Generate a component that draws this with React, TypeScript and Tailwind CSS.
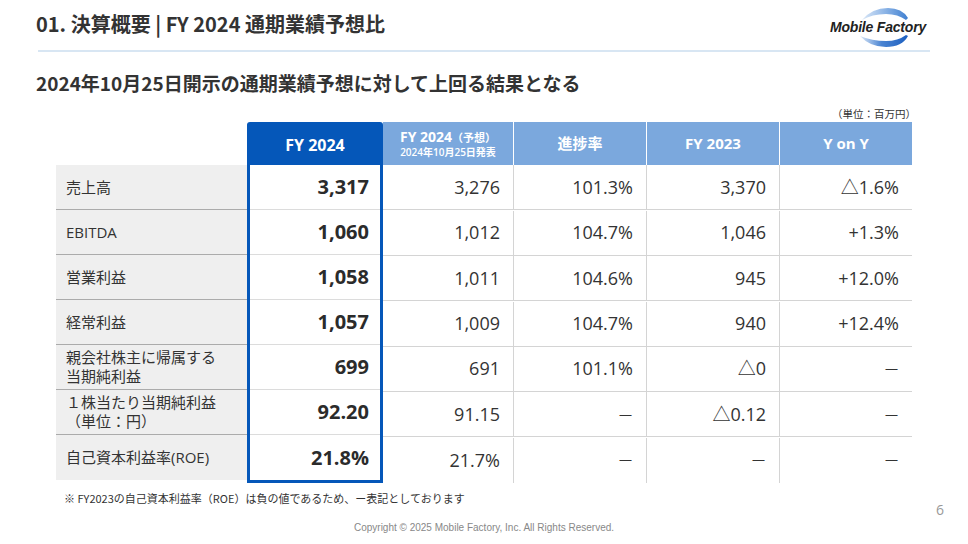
import React from "react";

type Row = {
  label: string[];
  fy: string;
  fc: string;
  prog: string;
  prev: string;
  yoy: string;
};

const DASH = "—";

const rows: Row[] = [
  { label: ["売上高"], fy: "3,317", fc: "3,276", prog: "101.3%", prev: "3,370", yoy: "△1.6%" },
  { label: ["EBITDA"], fy: "1,060", fc: "1,012", prog: "104.7%", prev: "1,046", yoy: "+1.3%" },
  { label: ["営業利益"], fy: "1,058", fc: "1,011", prog: "104.6%", prev: "945", yoy: "+12.0%" },
  { label: ["経常利益"], fy: "1,057", fc: "1,009", prog: "104.7%", prev: "940", yoy: "+12.4%" },
  { label: ["親会社株主に帰属する", "当期純利益"], fy: "699", fc: "691", prog: "101.1%", prev: "△0", yoy: DASH },
  { label: ["１株当たり当期純利益", "（単位：円）"], fy: "92.20", fc: "91.15", prog: DASH, prev: "△0.12", yoy: DASH },
  { label: ["自己資本利益率(ROE)"], fy: "21.8%", fc: "21.7%", prog: DASH, prev: DASH, yoy: DASH },
];

const font = "font-['Open_Sans','Noto_Sans_CJK_JP',sans-serif]";

function Value({ v }: { v: string }) {
  if (v === DASH) return <span className="text-[13px] pr-[1px]">{DASH}</span>;
  return <>{v}</>;
}

function Logo() {
  return (
    <div className="relative w-[104px] h-[40px] flex items-center justify-center">
      <svg className="absolute inset-0" width="104" height="40" viewBox="0 0 104 40">
        <defs>
          <linearGradient id="up" x1="0" y1="0" x2="1" y2="0">
            <stop offset="0" stopColor="#dbe8f7" />
            <stop offset="0.5" stopColor="#8cb4e6" />
            <stop offset="1" stopColor="#3f7fd0" />
          </linearGradient>
          <linearGradient id="down" x1="0" y1="0" x2="1" y2="0">
            <stop offset="0" stopColor="#dbe8f7" />
            <stop offset="0.45" stopColor="#4a84d2" />
            <stop offset="1" stopColor="#1c5fc0" />
          </linearGradient>
        </defs>
        <path d="M36 13 Q46 1 62 1 Q76 1 82 11 L80 13 Q72 7 60 7 Q46 7 36 13 Z" fill="url(#up)" />
        <path d="M34 29 Q44 40 60 40 Q76 40 82 29 L80 28 Q72 34 60 34 Q46 34 34 29 Z" fill="url(#down)" />
      </svg>
      <span className="relative font-['Liberation_Sans',sans-serif] font-bold italic text-[14px] text-[#222] tracking-[-0.2px]">
        Mobile Factory
      </span>
    </div>
  );
}

export default function App() {
  return (
    <div className={`w-[968px] h-[544px] bg-white overflow-hidden flex flex-col text-[#333] ${font}`}>
      <div className="flex items-start justify-between pl-[36px] pr-[38px] h-[50px]">
        <h1 className="mt-[10px] text-[20px] font-bold leading-[28px] font-['Noto_Sans_CJK_JP',sans-serif]">
          01. 決算概要 | FY 2024 通期業績予想比
        </h1>
        <div className="mt-[7px]">
          <Logo />
        </div>
      </div>
      <div className="mx-[38px] h-[2px] bg-[#d8e6f3]" />
      <h2 className="pl-[36px] mt-[18px] text-[19px] font-bold leading-[26px] font-['Noto_Sans_CJK_JP',sans-serif]">
        2024年10月25日開示の通期業績予想に対して上回る結果となる
      </h2>
      <div className="flex justify-end pr-[52px] mt-[11px] text-[10.5px] leading-[14px] text-[#333] font-['Noto_Sans_CJK_JP',sans-serif]">
        （単位：百万円）
      </div>

      <div className="flex ml-[56px] mt-[1px]">
        <div className="w-[191px] flex flex-col">
          <div className="h-[43px]" />
          {rows.map((r, i) => (
            <div
              key={i}
              className={`h-[45px] bg-[#efefef] flex flex-col justify-center pl-[10px] text-[15px] leading-[19px] ${
                i < rows.length - 1 ? "border-b border-[#ababab]" : ""
              }`}
            >
              {r.label.map((l, j) => (
                <span key={j}>{l}</span>
              ))}
            </div>
          ))}
        </div>

        <div className="w-[136px] border-[3px] border-[#0557b9] rounded-t-[3px] flex flex-col">
          <div className="h-[40px] bg-[#0557b9] flex items-center justify-center text-white font-bold text-[16px]">
            FY 2024
          </div>
          {rows.map((r, i) => (
            <div
              key={i}
              className={`h-[45px] flex items-center justify-end pr-[11px] font-bold text-[20px] text-[#2b2b2b] ${
                i < rows.length - 1 ? "border-b border-[#dcdcdc]" : ""
              }`}
            >
              {r.fy}
            </div>
          ))}
        </div>

        <div className="grid grid-cols-[130px_133px_133px_133px]">
          <div className="h-[43px] bg-[#7ba8dd] flex flex-col items-center justify-center text-white font-bold leading-[16px]">
            <span className="text-[14px]">
              FY 2024<span className="text-[11px]">（予想）</span>
            </span>
            <span className="text-[10px] font-semibold leading-[13px]">2024年10月25日発表</span>
          </div>
          <div className="h-[43px] bg-[#7ba8dd] border-l border-white flex items-center justify-center text-white font-bold text-[15px]">
            進捗率
          </div>
          <div className="h-[43px] bg-[#7ba8dd] border-l border-white flex items-center justify-center text-white font-bold text-[15px]">
            FY 2023
          </div>
          <div className="h-[43px] bg-[#7ba8dd] border-l border-white flex items-center justify-center text-white font-bold text-[15px]">
            Y on Y
          </div>
          {rows.map((r, i) =>
            [r.fc, r.prog, r.prev, r.yoy].map((v, k) => (
              <div
                key={`${i}-${k}`}
                className={`h-[45px] flex items-center justify-end pr-[13px] text-[18px] ${
                  k > 0 ? "border-l border-[#d4d4d4]" : ""
                } ${i < rows.length - 1 ? "border-b border-[#d4d4d4]" : ""}`}
              >
                <Value v={v} />
              </div>
            ))
          )}
        </div>
      </div>

      <div className="pl-[64px] mt-[7px] text-[11px] leading-[16px] font-['Noto_Sans_CJK_JP',sans-serif]">
        ※ FY2023の自己資本利益率（ROE）は負の値であるため、ー表記としております
      </div>
      <div className="flex justify-end pr-[24px] -mt-[5px] text-[14px] leading-[18px] text-[#999]">6</div>
      <div className="flex justify-center mt-[2px] text-[10px] leading-[14px] text-[#888] font-['Liberation_Sans',sans-serif]">
        Copyright © 2025 Mobile Factory, Inc. All Rights Reserved.
      </div>
    </div>
  );
}
